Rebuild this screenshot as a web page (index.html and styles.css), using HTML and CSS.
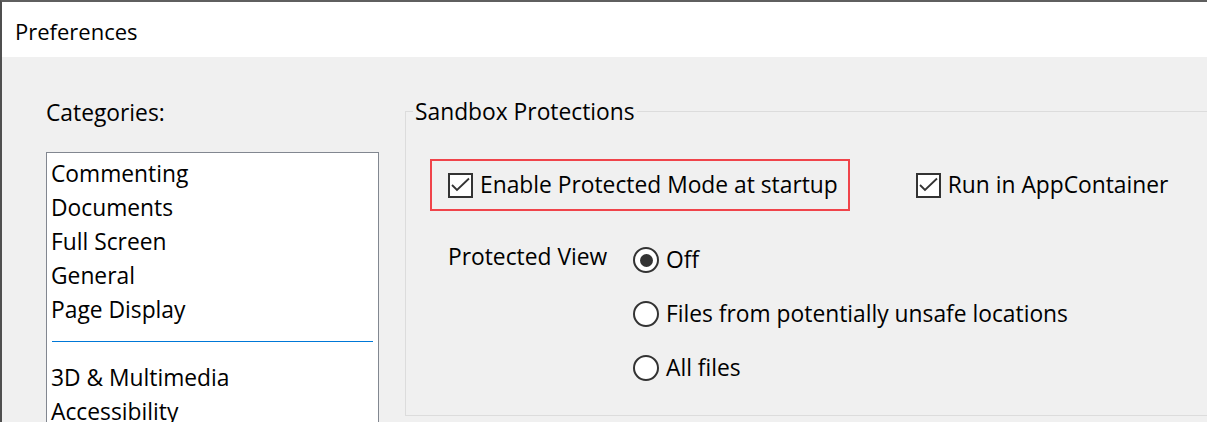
FILE: index.html
```html
<!DOCTYPE html>
<html lang="en">
<head>
<meta charset="utf-8">
<title>Preferences</title>
<link rel="stylesheet" href="styles.css">
</head>
<body>
<div class="window">
  <div class="titlebar">Preferences</div>
  <div class="content">
    <div class="left">
      <div class="cat-label">Categories:</div>
      <div class="listbox">
        <div class="item">Commenting</div>
        <div class="item">Documents</div>
        <div class="item">Full Screen</div>
        <div class="item">General</div>
        <div class="item">Page Display</div>
        <div class="sep-row"><div class="sep"></div></div>
        <div class="item">3D &amp; Multimedia</div>
        <div class="item">Accessibility</div>
      </div>
    </div>
    <div class="group">
      <div class="group-title">Sandbox Protections</div>
      <div class="group-box">
        <div class="row-checks">
          <div class="highlight">
            <div class="check">
              <span class="box"><svg viewBox="0 0 21 21" width="21" height="21"><path d="M2 10 L7 15 L19 3.5" fill="none" stroke="#333" stroke-width="1.8"/></svg></span>
              <span class="label">Enable Protected Mode at startup</span>
            </div>
          </div>
          <div class="check">
            <span class="box"><svg viewBox="0 0 21 21" width="21" height="21"><path d="M2 10 L7 15 L19 3.5" fill="none" stroke="#333" stroke-width="1.8"/></svg></span>
            <span class="label">Run in AppContainer</span>
          </div>
        </div>
        <div class="pv">
          <div class="pv-label">Protected View</div>
          <div class="radios">
            <div class="radio"><span class="dot checked"></span><span class="label">Off</span></div>
            <div class="radio"><span class="dot"></span><span class="label">Files from potentially unsafe locations</span></div>
            <div class="radio"><span class="dot"></span><span class="label">All files</span></div>
          </div>
        </div>
      </div>
    </div>
  </div>
</div>
</body>
</html>
```
FILE: styles.css
```css
html, body {
  margin: 0;
  padding: 0;
  width: 1207px;
  height: 422px;
  overflow: hidden;
  background: #f0f0f0;
}
body {
  font-family: "Open Sans", "Noto Sans", sans-serif;
  font-size: 22.8px;
  color: #000;
}
.window {
  height: 422px;
  border-top: 2px solid #5f5f5f;
  border-left: 2px solid #4f4f4f;
  box-sizing: border-box;
  display: flex;
  flex-direction: column;
}
.titlebar {
  background: #fff;
  height: 55px;
  box-sizing: border-box;
  padding: 14px 0 0 13px;
  line-height: 30px;
  font-size: 22px;
}
.content {
  flex: 1;
  display: flex;
  background: #f0f0f0;
  padding: 40px 0 0 44px;
  gap: 26px;
  overflow: hidden;
}
.left {
  width: 333px;
  flex: none;
  display: flex;
  flex-direction: column;
}
.cat-label {
  height: 55px;
  line-height: 32px;
  flex: none;
}
.listbox {
  background: #fff;
  border: 1px solid #828790;
  border-bottom: none;
  flex: 1;
  padding-top: 4px;
}
.item {
  height: 34px;
  line-height: 34px;
  padding-left: 4px;
  white-space: nowrap;
}
.sep-row {
  height: 34px;
  box-sizing: border-box;
  display: flex;
  align-items: flex-start;
  padding: 14px 5px 0;
}
.sep {
  flex: 1;
  height: 1px;
  background: #0078d7;
}
.group {
  flex: none;
  width: 900px;
  position: relative;
  margin-top: -1px;
}
.group-title {
  position: absolute;
  left: 8px;
  top: 1px;
  background: #f0f0f0;
  padding: 0 2px;
  line-height: 30px;
}
.group-box {
  margin-top: 15px;
  height: 305px;
  border: 1px solid #dcdcdc;
  box-sizing: border-box;
  padding: 47px 0 0 24px;
}
.row-checks {
  display: flex;
  align-items: center;
  gap: 66px;
}
.highlight {
  border: 2px solid #f0444a;
  padding: 10px 10px 10px 16px;
}
.check {
  display: flex;
  align-items: center;
  gap: 7px;
  height: 28px;
}
.box {
  width: 25px;
  height: 25px;
  box-sizing: border-box;
  border: 2px solid #333;
  background: #fff;
  display: flex;
  align-items: center;
  justify-content: center;
  flex: none;
}
.box svg {
  flex: none;
  width: 21px;
  height: 21px;
}
.label {
  white-space: nowrap;
  line-height: 28px;
}
.pv {
  display: flex;
  padding-left: 18px;
  margin-top: 35px;
}
.pv-label {
  width: 185px;
  line-height: 28px;
  margin-top: -3px;
}
.radios {
  display: flex;
  flex-direction: column;
  gap: 26px;
}
.radio {
  display: flex;
  align-items: center;
  gap: 7px;
  height: 28px;
}
.dot {
  width: 26px;
  height: 26px;
  box-sizing: border-box;
  border: 2px solid #333;
  border-radius: 50%;
  background: #fff;
  display: flex;
  align-items: center;
  justify-content: center;
  flex: none;
}
.dot.checked::after {
  content: "";
  width: 13px;
  height: 13px;
  border-radius: 50%;
  background: #333;
}
```
